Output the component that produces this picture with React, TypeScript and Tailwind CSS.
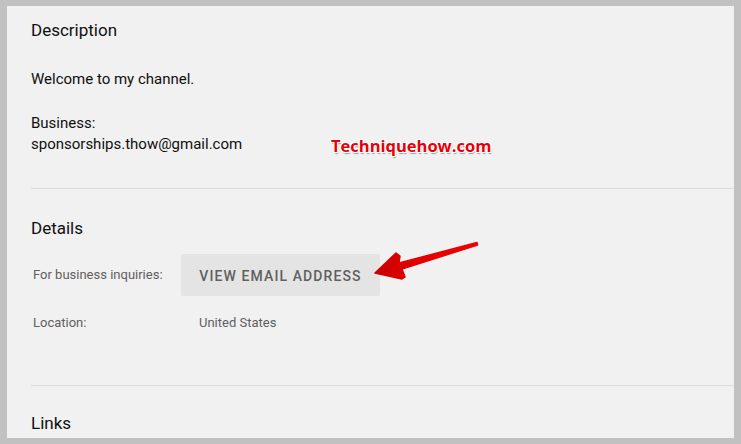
import React from 'react';

const font = { fontFamily: 'Roboto, "Noto Sans", Arial, sans-serif' };

const DetailRow = ({ label, children }: { label: string; children: React.ReactNode }) => (
  <div className="flex items-center">
    <div className="w-[150px] pl-[2px] text-[13px] text-[#606060]">{label}</div>
    {children}
  </div>
);

export default function App() {
  return (
    <div className="w-[741px] h-[444px] bg-[#c1c1c1] pt-[6px] pl-[7px] pr-[7px] pb-[6px]" style={font}>
      <div className="relative h-full bg-[#f1f1f1] pl-[24px] pt-[12px] overflow-hidden">
        <h2 className="text-[17px] leading-[24px] text-[#0f0f0f]">Description</h2>
        <div className="mt-[27px] text-[15px] leading-[21px] text-[#0f0f0f]">
          <p>Welcome to my channel.</p>
          <p className="mt-[23px]">Business:</p>
          <p>sponsorships.thow@gmail.com</p>
        </div>

        <div className="mt-[33px] h-px bg-[#dcdcdc]" />

        <h2 className="mt-[27px] text-[17px] leading-[24px] text-[#0f0f0f]">Details</h2>
        <div className="mt-[14px] flex flex-col">
          <DetailRow label="For business inquiries:">
            <button className="h-[42px] w-[199px] rounded-[2px] bg-[#e4e4e4] pt-[2px] text-[14px] font-medium tracking-[1.1px] text-[#606060]">
              VIEW EMAIL ADDRESS
            </button>
          </DetailRow>
          <div className="mt-[16px]">
            <DetailRow label="Location:">
              <span className="pl-[18px] text-[13px] leading-[22px] text-[#606060]">United States</span>
            </DetailRow>
          </div>
        </div>

        <div className="mt-[51px] h-px bg-[#dcdcdc]" />

        <h2 className="mt-[25px] text-[17px] leading-[24px] text-[#0f0f0f]">Links</h2>

        {/* watermark */}
        <div
          className="absolute left-[324px] top-[128px] text-[16.5px] font-bold text-[#e5000a]"
          style={{
            fontFamily: '"Open Sans", "DejaVu Sans", sans-serif',
            textShadow: '1px 1px 0 #fff, -1px -1px 0 #fff, 1px -1px 0 #fff, -1px 1px 0 #fff, 1px 2px 1px #999',
          }}
        >
          Techniquehow.com
        </div>

        {/* arrow */}
        <svg className="absolute left-[353px] top-[229px]" width="130" height="55" viewBox="0 0 130 55">
          <defs>
            <linearGradient id="ag" x1="0" y1="0" x2="1" y2="0">
              <stop offset="0" stopColor="#c80000" />
              <stop offset="0.35" stopColor="#e00000" />
              <stop offset="1" stopColor="#f00000" />
            </linearGradient>
          </defs>
          <polygon
            points="15,38 36,18 40,21 39,28 117,7.5 117.5,10 42,34 45,42 42,44"
            fill="url(#ag)"
            stroke="url(#ag)"
            strokeWidth="1.5"
            strokeLinejoin="round"
          />
        </svg>
      </div>
    </div>
  );
}
